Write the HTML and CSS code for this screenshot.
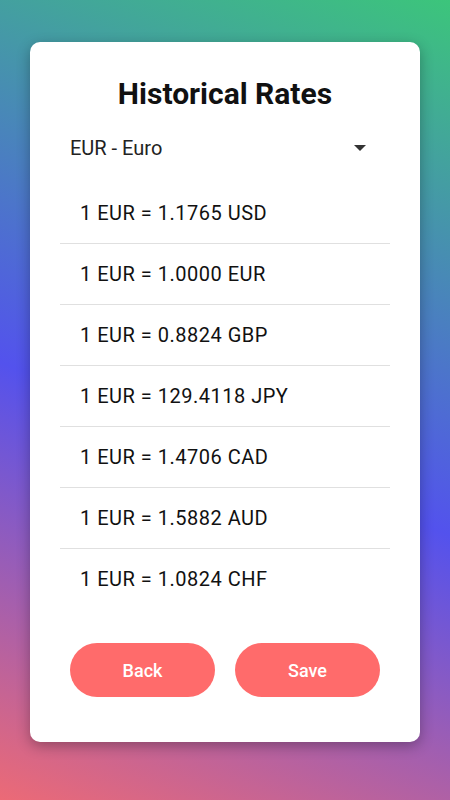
FILE: index.html
```html
<!DOCTYPE html>
<html lang="en">
<head>
    <meta charset="UTF-8">
    <meta name="viewport" content="width=device-width, initial-scale=1.0">
    <title>Historical Rates</title>
    <link rel="stylesheet" href="styles.css">
</head>
<body>
    <div class="card">
        <h1>Historical Rates</h1>

        <!-- Base currency picker -->
        <div class="select-wrap">
            <select class="currency-select">
                <option>EUR - Euro</option>
                <option>USD - US Dollar</option>
                <option>GBP - British Pound</option>
            </select>
            <svg class="select-arrow" width="12" height="6" viewBox="0 0 12 6">
                <path d="M0 0 L12 0 L6 6 Z" fill="#333"/>
            </svg>
        </div>

        <ul class="rate-list">
            <li>1 EUR = 1.1765 USD</li>
            <li>1 EUR = 1.0000 EUR</li>
            <li>1 EUR = 0.8824 GBP</li>
            <li>1 EUR = 129.4118 JPY</li>
            <li>1 EUR = 1.4706 CAD</li>
            <li>1 EUR = 1.5882 AUD</li>
            <li>1 EUR = 1.0824 CHF</li>
        </ul>

        <div class="actions">
            <button type="button" class="action-button">Back</button>
            <button type="button" class="action-button">Save</button>
        </div>
    </div>
</body>
</html>
```

FILE: styles.css
```css
body {
    font-family: Roboto, "Liberation Sans", sans-serif;
    margin: 0;
    padding: 42px 30px;
    min-height: 800px;
    box-sizing: border-box;
    background: linear-gradient(21deg, #ec6a76 0%, #5352ed 45%, #3cc57b 100%); /* pink -> blue -> green */
}

.card {
    background-color: #fff;
    border-radius: 10px;
    box-shadow: 0 4px 14px rgba(0, 0, 0, 0.3);
    padding: 30px 30px 35px;
}

h1 {
    margin: 0;
    font-size: 30px;
    font-weight: 700;
    line-height: 44px;
    text-align: center;
    color: #111;
}

/* Select with a custom arrow on top */
.select-wrap {
    position: relative;
    margin: 7px 0 10px;
}

.currency-select {
    appearance: none;
    -webkit-appearance: none;
    display: block;
    width: 100%;
    height: 50px;
    padding: 0 10px;
    border: none;
    background: transparent;
    font-family: inherit;
    font-size: 20px;
    color: #222;
    outline: none;
}

.select-arrow {
    position: absolute;
    top: 22px;
    right: 24px;
    pointer-events: none;
}

.rate-list {
    list-style: none;
    margin: 0;
    padding: 0;
}

.rate-list li {
    height: 60px;
    line-height: 60px;
    padding-left: 20px;
    font-size: 20px;
    letter-spacing: 0.5px;
    color: #111;
    border-bottom: 1px solid #e0e0e0;
}

.rate-list li:last-child {
    border-bottom: none;
}

.actions {
    display: flex;
    margin-top: 24px;
}

.action-button {
    flex: 1;
    margin: 10px;
    height: 54px;
    border: none;
    border-radius: 27px;
    background-color: #ff6b6b;
    color: #fff;
    font-family: inherit;
    font-size: 18px;
    font-weight: 500;
    cursor: pointer;
}
```
